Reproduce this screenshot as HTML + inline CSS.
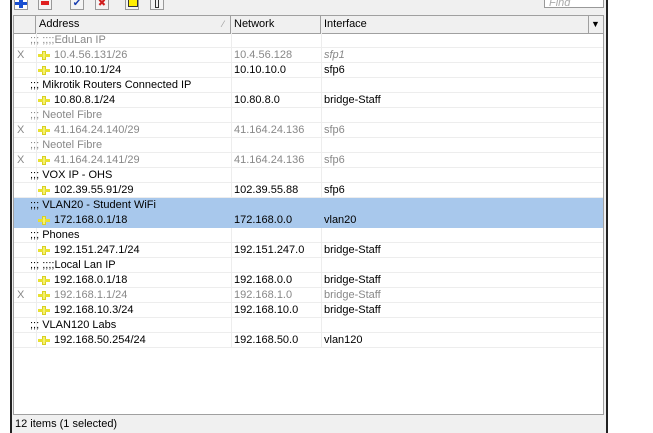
<html><head><style>
body{margin:0;width:653px;height:433px;background:#fff;position:relative;overflow:hidden;font-family:"Liberation Sans",sans-serif;font-size:11px;}
.win{position:absolute;left:10px;top:0;width:594px;height:433px;background:#f0f0f0;border-left:2px solid #222;border-right:2px solid #222;}
.tb{position:absolute;top:0;width:12px;height:9px;border:1px solid #999;border-top:none;background:#f4f4f4}
.grid{position:absolute;left:1px;top:15px;width:589px;height:398px;background:#fff;border:1px solid #a0a0a0;}
.hdr{position:absolute;left:0;top:0;width:589px;height:17px;background:#f0f0f0;border-bottom:1px solid #a0a0a0}
.hc{position:absolute;top:0;height:17px;line-height:17px;border-right:1px solid #a0a0a0;padding-left:3px;box-sizing:border-box;color:#000}
.row{position:absolute;left:0;width:589px;height:15px;line-height:15px;border-bottom:1px solid #ededed;box-sizing:border-box;white-space:nowrap}
.row span{position:absolute;top:0}
.sel{background:#a8c8ec;border-bottom-color:#a8c8ec}
.g{color:#888}
.ic{position:absolute;left:24px;top:3px;width:12px;height:9px}
.vl{position:absolute;top:17px;width:1px;height:315px;background:#ededed}
.status{position:absolute;left:3px;top:418px;font-size:11px}
</style></head><body>
<div class="win">
<div class="tb" style="left:2px;background:#fff"><div style="position:absolute;left:4px;top:0;width:4px;height:8px;background:#1a4fd0"></div><div style="position:absolute;left:0;top:2px;width:12px;height:3px;background:#1a4fd0"></div></div>
<div class="tb" style="left:26px"><div style="position:absolute;left:2px;top:1px;width:8px;height:4px;background:#e02020"></div></div>
<div class="tb" style="left:58px;color:#1a3fb0;font-size:10px;line-height:7px;text-align:center">✔</div>
<div class="tb" style="left:83px;color:#d02020;font-size:10px;line-height:7px;text-align:center">✖</div>
<div class="tb" style="left:113px"><div style="position:absolute;left:2px;top:0;width:8px;height:6px;background:#ffee00;border:1px solid #333;border-top:none"></div></div>
<div class="tb" style="left:138px"><div style="position:absolute;left:4px;top:0;width:2px;height:7px;border:1px solid #333;border-top:none"></div></div>
<div style="position:absolute;left:532px;top:-1px;width:60px;height:9px;background:#fff;border:1px solid #999;color:#aaa;font-style:italic;font-size:11px;line-height:7px;padding-left:4px;box-sizing:border-box">Find</div>
<div class="grid">
<div class="hdr">
<div class="hc" style="left:0;width:22px"></div>
<div class="hc" style="left:22px;width:195px">Address<span style="position:absolute;right:6px;color:#999;font-size:9px">⁄</span></div>
<div class="hc" style="left:217px;width:90px">Network</div>
<div class="hc" style="left:307px;width:268px">Interface</div>
<div class="hc" style="left:575px;width:14px;border:none;font-size:9px;padding-left:2px">▼</div>
</div>
<div class="vl" style="left:22px"></div><div class="vl" style="left:217px"></div><div class="vl" style="left:307px"></div>
<div id="rows"></div>
</div>
<div class="status">12 items (1 selected)</div>
</div>
<script>
var R=[
['c',';;; ;;;;EduLan IP',1],
['X','10.4.56.131/26','10.4.56.128','sfp1',1,1],
['','10.10.10.1/24','10.10.10.0','sfp6'],
['c',';;; Mikrotik Routers Connected IP'],
['','10.80.8.1/24','10.80.8.0','bridge-Staff'],
['c',';;; Neotel Fibre',1],
['X','41.164.24.140/29','41.164.24.136','sfp6',1],
['c',';;; Neotel Fibre',1],
['X','41.164.24.141/29','41.164.24.136','sfp6',1],
['c',';;; VOX IP - OHS'],
['','102.39.55.91/29','102.39.55.88','sfp6'],
['c',';;; VLAN20 - Student WiFi',0,'s'],
['','172.168.0.1/18','172.168.0.0','vlan20',0,0,'s'],
['c',';;; Phones'],
['','192.151.247.1/24','192.151.247.0','bridge-Staff'],
['c',';;; ;;;;Local Lan IP'],
['','192.168.0.1/18','192.168.0.0','bridge-Staff'],
['X','192.168.1.1/24','192.168.1.0','bridge-Staff',1],
['','192.168.10.3/24','192.168.10.0','bridge-Staff'],
['c',';;; VLAN120 Labs'],
['','192.168.50.254/24','192.168.50.0','vlan120']];
var h='';
R.forEach(function(r,i){
var y=17+i*15;
if(r[0]=='c'){
var s=r[3]=='s';
h+='<div class="row'+(s?' sel':'')+'" style="top:'+y+'px"><span class="'+(r[2]?'g':'')+'" style="left:16px">'+r[1]+'</span></div>';
}else{
var s=r[6]=='s',g=r[4]?'g':'';
h+='<div class="row'+(s?' sel':'')+'" style="top:'+y+'px">'+(r[0]?'<span class="g" style="left:3px">X</span>':'')+
'<svg class="ic" viewBox="0 0 12 9"><rect x="4" y="0" width="4" height="9" fill="#d8d020"/><rect x="0" y="3" width="12" height="3" fill="#e8e030"/><rect x="5" y="1" width="2" height="7" fill="#f4f070"/></svg>'+
'<span class="'+g+'" style="left:40px">'+r[1]+'</span><span class="'+g+'" style="left:220px">'+r[2]+'</span><span class="'+g+'" style="left:310px'+(r[5]?';font-style:italic':'')+'">'+r[3]+'</span></div>';
}});
document.getElementById('rows').innerHTML=h;
</script>
</body></html>
